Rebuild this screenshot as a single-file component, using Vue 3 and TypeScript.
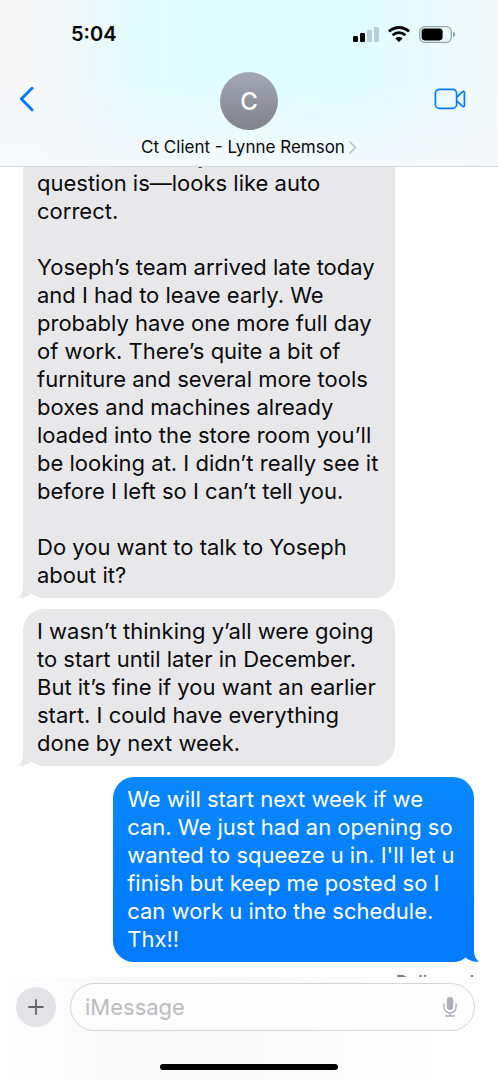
<script setup lang="ts">
import { ref } from 'vue'

interface Message {
  id: number
  sent: boolean
  text: string
}

const contact = 'Ct Client - Lynne Remson'
const draft = ref('')

const messages: Message[] = [
  {
    id: 1,
    sent: false,
    text: [
      'Not sure about your',
      'question is—looks like auto',
      'correct.',
      '',
      'Yoseph’s team arrived late today',
      'and I had to leave early. We',
      'probably have one more full day',
      'of work. There’s quite a bit of',
      'furniture and several more tools',
      'boxes and machines already',
      'loaded into the store room you’ll',
      'be looking at. I didn’t really see it',
      'before I left so I can’t tell you.',
      '',
      'Do you want to talk to Yoseph',
      'about it?',
    ].join('\n'),
  },
  {
    id: 2,
    sent: false,
    text: [
      'I wasn’t thinking y’all were going',
      'to start until later in December.',
      'But it’s fine if you want an earlier',
      'start. I could have everything',
      'done by next week.',
    ].join('\n'),
  },
  {
    id: 3,
    sent: true,
    text: [
      'We will start next week if we',
      'can. We just had an opening so',
      "wanted to squeeze u in. I'll let u",
      'finish but keep me posted so I',
      'can work u into the schedule.',
      'Thx!!',
    ].join('\n'),
  },
]
</script>

<template>
  <div class="app">
    <header class="header">
      <div class="status">
        <time class="clock">5:04</time>
        <div class="indicators">
          <svg width="26" height="16" viewBox="0 0 26 16" aria-label="Signal">
            <rect x="0" y="10" width="5" height="6" rx="1.3" />
            <rect x="7" y="7" width="5" height="9" rx="1.3" />
            <rect x="14" y="4" width="5" height="12" rx="1.3" fill="#b7ced8" />
            <rect x="21" y="1" width="5" height="15" rx="1.3" fill="#b7ced8" />
          </svg>
          <svg width="22" height="16" viewBox="0 0 22 16" aria-label="Wi-Fi">
            <g fill="none" stroke="#000" stroke-width="2.8">
              <path d="M1 5.6C6.6.1 15.4.1 21 5.6" />
              <path d="M4.6 9.3c3.6-3.5 9.2-3.5 12.8 0" />
            </g>
            <path d="M11 16l-3.6-3.6c2-1.8 5.2-1.8 7.2 0z" />
          </svg>
          <svg width="37" height="17" viewBox="0 0 37 17" aria-label="Battery">
            <rect x=".7" y=".7" width="31.6" height="15.6" rx="5" fill="none" stroke="#8fa6a8" stroke-width="1.3" />
            <rect x="2.6" y="2.6" width="21" height="11.8" rx="3.3" />
            <path d="M34 5.8c3 .8 3 4.6 0 5.4z" fill="#8fa6a8" />
          </svg>
        </div>
      </div>
      <div class="nav">
        <button class="icon-btn back" type="button" aria-label="Back">
          <svg width="16" height="26" viewBox="0 0 16 26">
            <path d="M13 2.3L2.3 13 13 23.7" fill="none" stroke="#007aff" stroke-width="3" stroke-linecap="round" stroke-linejoin="round" />
          </svg>
        </button>
        <button class="contact" type="button">
          <span class="avatar" aria-hidden="true">C</span>
          <span class="name">
            {{ contact }}
            <svg width="8" height="13" viewBox="0 0 8 13">
              <path d="M1 1l5.6 5.5L1 12" fill="none" stroke="#b4bcc2" stroke-width="1.4" stroke-linecap="round" stroke-linejoin="round" />
            </svg>
          </span>
        </button>
        <button class="icon-btn video" type="button" aria-label="FaceTime">
          <svg width="32" height="22" viewBox="0 0 32 22" fill="none" stroke="#007aff" stroke-width="1.7" stroke-linejoin="round">
            <rect x="1.4" y="1.4" width="21.2" height="19" rx="4" />
            <path d="M22.8 9.2l5.6-5.4c.9-.8 2-.4 2 .7v13c0 1.100-1.100 1.500-2 .7l-5.600-5.400" />
          </svg>
        </button>
      </div>
    </header>

    <main class="thread">
      <div v-for="m in messages" :key="m.id" class="bubble" :class="m.sent ? 'sent' : 'received'">
        <p>{{ m.text }}</p>
        <svg class="tail" width="20" height="24" viewBox="0 0 20 24" aria-hidden="true">
          <path d="M5 1V13C5 18 3 21.500 0 23.500C4 24.300 9 23 13 20L14 1z" />
        </svg>
      </div>
      <div class="receipt">Delivered</div>
    </main>

    <footer class="footer">
      <form class="composer" @submit.prevent>
        <button class="plus" type="button" aria-label="Add attachment">
          <svg width="16" height="16" viewBox="0 0 16 16">
            <path d="M8 1v14M1 8h14" stroke="#62646a" stroke-width="1.8" stroke-linecap="round" />
          </svg>
        </button>
        <div class="field">
          <input v-model="draft" type="text" placeholder="iMessage" aria-label="iMessage" />
          <button class="mic" type="button" aria-label="Dictate">
            <svg width="14" height="20" viewBox="0 0 14 20">
              <rect x="3.800" y="0" width="6.400" height="13" rx="3.200" fill="#aeb0b8" />
              <path d="M.9 7v2.800a6.100 6.100 0 0 0 12.200 0V7M7 16v3M2.800 19h8.400" fill="none" stroke="#aeb0b8" stroke-width="1.500" stroke-linecap="round" />
            </svg>
          </button>
        </div>
      </form>
      <div class="home-bar"></div>
    </footer>
  </div>
</template>

<style>
body {
  margin: 0;
  background: #fff;
}
</style>

<style scoped>
.app {
  display: flex;
  flex-direction: column;
  height: 100vh;
  overflow: hidden;
  color: #0b0b0d;
  background: #fff;
  font-family: Inter, "Liberation Sans", sans-serif;
}

button {
  padding: 0;
  border: 0;
  background: none;
  color: inherit;
  font-family: inherit;
  cursor: pointer;
}

svg {
  display: block;
  flex: none;
}

.header {
  flex: none;
  border-bottom: 1px solid #d3d8da;
  background:
    linear-gradient(to bottom, rgba(246, 248, 251, 0) 50%, rgba(246, 248, 251, 0.9) 100%),
    linear-gradient(to right, #f7f7f8 6%, #eef8fb 17%, #e2fdff 28%, #dffeff 50%, #e0fdff 72%, #eafafc 86%, #f3f9fb 100%);
}

.status {
  display: flex;
  align-items: center;
  justify-content: space-between;
  height: 68px;
  padding: 0 42px 0 71px;
}

.clock {
  font-size: 20px;
  font-weight: 600;
  color: #000;
}

.indicators {
  display: flex;
  align-items: center;
  gap: 9px;
}

.nav {
  display: grid;
  grid-template-columns: 48px 1fr 48px;
  height: 98px;
}

.icon-btn {
  display: flex;
  align-items: center;
  height: 62px;
}

.back {
  padding-left: 19px;
}

.video {
  justify-content: flex-end;
  padding-right: 32px;
}

.contact {
  display: flex;
  flex-direction: column;
  align-items: center;
  gap: 6px;
  padding-top: 4px;
}

.avatar {
  display: grid;
  place-items: center;
  width: 58px;
  height: 58px;
  border-radius: 50%;
  background: linear-gradient(#a3a8b5, #80828c);
  color: #fff;
  font-size: 24px;
  font-weight: 500;
}

.name {
  display: flex;
  align-items: center;
  gap: 4px;
  font-size: 17px;
  line-height: 22px;
  white-space: nowrap;
}

.thread {
  display: flex;
  flex: 1;
  flex-direction: column;
  justify-content: flex-end;
  min-height: 0;
  overflow: hidden;
  padding: 0 24px 0 23px;
}

.bubble {
  position: relative;
  flex: none;
  box-sizing: border-box;
  margin-bottom: 11px;
  padding: 8px 0 9px 14px;
  border-radius: 21px;
  font-size: 22px;
  line-height: 28px;
}

.bubble p {
  margin: 0;
  white-space: pre;
}

.received {
  width: 82.5%;
  background: #e8e8ea;
}

.sent {
  align-self: flex-end;
  width: 80%;
  background: linear-gradient(#0a88ff, #007aff 85%);
  color: #fff;
}

.tail {
  position: absolute;
  bottom: 0;
  left: -5px;
  fill: #e8e8ea;
}

.sent .tail {
  right: -5px;
  left: auto;
  fill: #007aff;
  transform: scaleX(-1);
}

.receipt {
  flex: none;
  align-self: flex-end;
  height: 4px;
  font-size: 17px;
  font-weight: 600;
  line-height: 18px;
  color: #7c7c81;
}

.footer {
  flex: none;
  padding: 6px 0 10px;
  background: linear-gradient(to right, #fff, #f8f8f9 25%, #fafafb 60%, #fff 90%);
}

.composer {
  display: flex;
  align-items: center;
  gap: 14px;
  padding: 0 23px 0 16px;
}

.plus {
  display: grid;
  flex: none;
  place-items: center;
  width: 40px;
  height: 40px;
  border-radius: 50%;
  background: #e3e3e7;
}

.field {
  display: flex;
  flex: 1;
  align-items: center;
  box-sizing: border-box;
  height: 48px;
  padding: 0 17px 0 14px;
  border: 1px solid #d5d5d9;
  border-radius: 24px;
  background: #fdfdfe;
}

.field input {
  flex: 1;
  min-width: 0;
  padding: 0;
  border: 0;
  outline: 0;
  background: none;
  color: #0b0b0d;
  font-family: inherit;
  font-size: 22px;
}

.field input::placeholder {
  color: #bbbbbe;
  opacity: 1;
}

.home-bar {
  width: 178px;
  height: 6px;
  margin: 33px auto 0;
  border-radius: 3px;
  background: #000;
}
</style>
